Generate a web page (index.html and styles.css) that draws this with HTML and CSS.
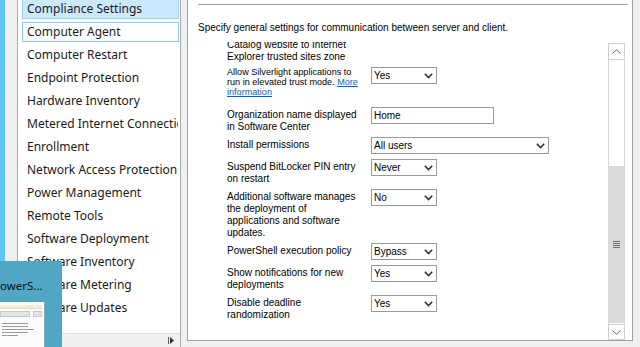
FILE: index.html
```html
<!DOCTYPE html>
<html lang="en">
<head>
<meta charset="UTF-8">
<meta name="viewport" content="width=device-width, initial-scale=1.0">
<title>Client Settings</title>
<link rel="stylesheet" href="styles.css">
</head>
<body>

<div class="screen">
    <div class="edge"></div>

    <div class="side">
        <div class="nav">
            <ul class="nav-list">
                <li class="nav-item selected">Compliance Settings</li>
                <li class="nav-item focused">Computer Agent</li>
                <li class="nav-item">Computer Restart</li>
                <li class="nav-item">Endpoint Protection</li>
                <li class="nav-item">Hardware Inventory</li>
                <li class="nav-item">Metered Internet Connections</li>
                <li class="nav-item">Enrollment</li>
                <li class="nav-item">Network Access Protection (NAP)</li>
                <li class="nav-item">Power Management</li>
                <li class="nav-item">Remote Tools</li>
                <li class="nav-item">Software Deployment</li>
                <li class="nav-item">Software Inventory</li>
                <li class="nav-item">Software Metering</li>
                <li class="nav-item">Software Updates</li>
            </ul>
            <div class="hscroll">
                <svg width="7" height="7" viewBox="0 0 7 7"><rect x="0" y="0" width="1" height="7" fill="#606060"/><path d="M2 0 L6 3.5 L2 7 Z" fill="#333"/></svg>
            </div>
        </div>
    </div>

    <div class="pane">
        <div class="pane-rule"></div>
        <p class="intro">Specify general settings for communication between server and client.</p>

        <div class="grid-box">
            <div class="grid-view">
                <div class="grid-rows">
                    <div class="row">
                        <div class="label">Catalog website to Internet Explorer trusted sites zone</div>
                    </div>
                    <div class="row row-tall">
                        <div class="label label-small">Allow Silverlight applications to run in elevated trust mode. <a href="#">More information</a></div>
                        <div class="select">Yes<svg class="chev" width="9" height="6" viewBox="0 0 9 6"><path d="M0.8 0.8 L4.5 4.6 L8.2 0.8" fill="none" stroke="#333" stroke-width="1.6"/></svg></div>
                    </div>
                    <div class="row">
                        <div class="label">Organization name displayed in Software Center</div>
                        <div class="input">Home</div>
                    </div>
                    <div class="row">
                        <div class="label">Install permissions</div>
                        <div class="select wide">All users<svg class="chev" width="9" height="6" viewBox="0 0 9 6"><path d="M0.8 0.8 L4.5 4.6 L8.2 0.8" fill="none" stroke="#333" stroke-width="1.6"/></svg></div>
                    </div>
                    <div class="row">
                        <div class="label">Suspend BitLocker PIN entry on restart</div>
                        <div class="select">Never<svg class="chev" width="9" height="6" viewBox="0 0 9 6"><path d="M0.8 0.8 L4.5 4.6 L8.2 0.8" fill="none" stroke="#333" stroke-width="1.6"/></svg></div>
                    </div>
                    <div class="row">
                        <div class="label">Additional software manages the deployment of applications and software updates.</div>
                        <div class="select">No<svg class="chev" width="9" height="6" viewBox="0 0 9 6"><path d="M0.8 0.8 L4.5 4.6 L8.2 0.8" fill="none" stroke="#333" stroke-width="1.6"/></svg></div>
                    </div>
                    <div class="row">
                        <div class="label">PowerShell execution policy</div>
                        <div class="select">Bypass<svg class="chev" width="9" height="6" viewBox="0 0 9 6"><path d="M0.8 0.8 L4.5 4.6 L8.2 0.8" fill="none" stroke="#333" stroke-width="1.6"/></svg></div>
                    </div>
                    <div class="row">
                        <div class="label">Show notifications for new deployments</div>
                        <div class="select">Yes<svg class="chev" width="9" height="6" viewBox="0 0 9 6"><path d="M0.8 0.8 L4.5 4.6 L8.2 0.8" fill="none" stroke="#333" stroke-width="1.6"/></svg></div>
                    </div>
                    <div class="row">
                        <div class="label">Disable deadline randomization</div>
                        <div class="select">Yes<svg class="chev" width="9" height="6" viewBox="0 0 9 6"><path d="M0.8 0.8 L4.5 4.6 L8.2 0.8" fill="none" stroke="#333" stroke-width="1.6"/></svg></div>
                    </div>
                </div>
            </div>

            <div class="vscroll">
                <div class="vscroll-btn">
                    <svg width="9" height="5" viewBox="0 0 9 5"><path d="M0.5 4.5 L4.5 0.8 L8.5 4.5" fill="none" stroke="#606060" stroke-width="1"/></svg>
                </div>
                <div class="vscroll-track">
                    <div class="vscroll-thumb">
                        <svg width="7" height="7" viewBox="0 0 7 7"><path d="M0 0.5 H7 M0 2.5 H7 M0 4.5 H7 M0 6.5 H7" stroke="#707070" stroke-width="1"/></svg>
                    </div>
                </div>
                <div class="vscroll-btn down">
                    <svg width="9" height="5" viewBox="0 0 9 5"><path d="M0.5 0.5 L4.5 4.2 L8.5 0.5" fill="none" stroke="#606060" stroke-width="1"/></svg>
                </div>
            </div>
        </div>
    </div>
</div>

<!-- taskbar preview popup sitting over the window -->
<div class="preview">
    <div class="preview-title">owerS...</div>
    <div class="preview-shot">
        <div class="shot-bar"></div>
        <div class="shot-fields"><span class="shot-field"></span><span class="shot-field short"></span></div>
        <div class="shot-lines">
            <span class="shot-line"></span>
            <span class="shot-line"></span>
            <span class="shot-line long"></span>
            <span class="shot-line"></span>
            <span class="shot-line short"></span>
        </div>
    </div>
</div>

</body>
</html>
```

FILE: styles.css
```css
body {
    margin: 0;
    width: 640px;
    height: 347px;
    overflow: hidden;
    position: relative;
    background-color: #f0f0f0;
    font-family: "Liberation Sans", Arial, sans-serif;
    color: #000;
}

.screen {
    display: flex;
    height: 347px;
}

.edge {
    width: 5px;
    background-color: #5ec5ee;
    border-right: 1px solid #e6f5fb;
}

/* left list of setting groups */
.side {
    width: 181px;
    padding-left: 11px;
    box-sizing: border-box;
}

.nav {
    width: 164px;
    height: 347px;
    box-sizing: border-box;
    border-left: 1px solid #a9a9a9;
    border-right: 1px solid #a9a9a9;
    background-color: #fff;
    display: flex;
    flex-direction: column;
    overflow: hidden;
}

.nav-list {
    list-style: none;
    margin: -1px 0 0 0;
    padding: 0;
    flex: 1;
    overflow: hidden;
    font-family: "Noto Sans", "Open Sans", sans-serif;
    font-size: 12px;
    color: #1a1a1a;
}

.nav-item {
    height: 20px;
    margin: 0 1px 3px 4px;
    padding: 0 4px;
    box-sizing: border-box;
    border: 1px solid transparent;
    line-height: 17px;
    white-space: nowrap;
    overflow: hidden;
}

.nav-item.selected {
    background-color: #cce8ff;
    border-color: #99d1ff;
}

.nav-item.focused {
    border-color: #8cc4f4;
}

.hscroll {
    height: 13px;
    border-top: 1px solid #e2e2e2;
    background-color: #f0f0f0;
    display: flex;
    justify-content: flex-end;
    align-items: center;
    padding-right: 5px;
}

/* right settings pane */
.pane {
    width: 446px;
    height: 341px;
    box-sizing: border-box;
    border-left: 1px solid #a0a0a0;
    border-right: 1px solid #a0a0a0;
    border-bottom: 1px solid #a0a0a0;
    background-color: #fff;
    display: flex;
    flex-direction: column;
}

.pane-rule {
    margin: 4px 4px 0 10px;
    border-top: 1px solid #a0a0a0;
}

.intro {
    margin: 17px 0 0 10px;
    font-size: 10px;
    line-height: 12px;
}

.grid-box {
    margin-top: 8px;
    height: 298px;
    display: flex;
}

.grid-view {
    flex: 1;
    overflow: hidden;
}

.grid-rows {
    margin-top: -5px;
    padding-left: 39px;
}

.row {
    display: flex;
    align-items: flex-start;
    min-height: 18px;
    margin-bottom: 4px;
}

.row-tall {
    padding-bottom: 6px;
}

.label {
    width: 133px;
    margin-right: 11px;
    padding-top: 2px;
    font-size: 10px;
    line-height: 12px;
    color: #000;
}

.label-small {
    padding-top: 0;
    font-size: 9.1px;
    line-height: 10px;
}

.label a {
    color: #0066cc;
    text-decoration: underline;
}

.select,
.input {
    height: 17px;
    box-sizing: border-box;
    border: 1px solid #9a9a9a;
    background-color: #fff;
    font-size: 10px;
    line-height: 15px;
    padding: 0 2px;
    position: relative;
}

.select {
    width: 66px;
}

.select.wide {
    width: 178px;
}

.input {
    width: 123px;
}

.chev {
    position: absolute;
    right: 3px;
    top: 5px;
}

.vscroll {
    width: 17px;
    height: 297px;
    margin: 1px 7px 0 0;
    display: flex;
    flex-direction: column;
}

.vscroll-btn {
    height: 17px;
    box-sizing: border-box;
    border: 1px solid #cfcfcf;
    display: flex;
    justify-content: center;
    align-items: center;
    background-color: #fff;
}

.vscroll-btn.down {
    height: 16px;
}

.vscroll-track {
    flex: 1;
    border-left: 1px solid #d8d8d8;
    border-right: 1px solid #d8d8d8;
    display: flex;
    flex-direction: column;
}

.vscroll-thumb {
    flex: 1;
    margin: 106px 0 1px 0;
    background-color: #dadada;
    display: flex;
    justify-content: center;
    align-items: center;
}

/* taskbar preview */
.preview {
    position: absolute;
    left: 0;
    top: 261px;
    width: 62px;
    height: 86px;
    background-color: #50a6c3;
}

.preview-title {
    margin-top: 18px;
    height: 23px;
    font-family: "Noto Sans", sans-serif;
    font-size: 11.5px;
    line-height: 14px;
    color: #111;
    white-space: nowrap;
    overflow: hidden;
}

.preview-shot {
    width: 45px;
    height: 45px;
    background-color: #fbfbfb;
    border-right: 1px solid #8ab;
    box-sizing: border-box;
    padding: 3px 2px 0 0;
}

.shot-bar {
    height: 3px;
    background-color: #f4eed2;
    border-bottom: 1px solid #d8d8d8;
}

.shot-fields {
    display: flex;
    gap: 3px;
    margin-top: 2px;
}

.shot-field {
    width: 30px;
    height: 4px;
    background-color: #e4e4e4;
    border: 1px solid #c8c8c8;
}

.shot-field.short {
    width: 8px;
}

.shot-lines {
    margin: 6px 0 0 2px;
    display: flex;
    flex-direction: column;
    gap: 2px;
}

.shot-line {
    width: 26px;
    height: 1px;
    background-color: #9a9a9a;
}

.shot-line.long {
    width: 32px;
}

.shot-line.short {
    width: 16px;
}
```
